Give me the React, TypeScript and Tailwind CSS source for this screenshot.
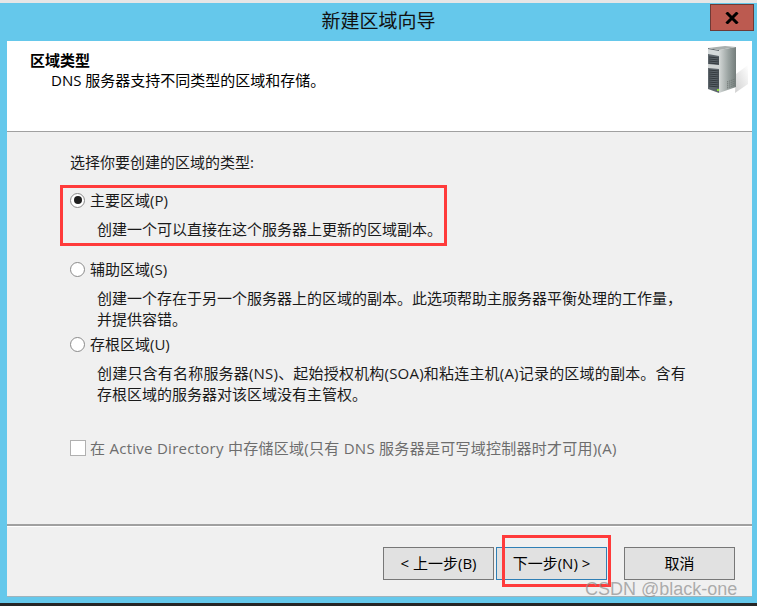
const font = '[font-family:"Open_Sans","Noto_Sans_CJK_SC",sans-serif]'

function ServerIcon() {
  return (
    <svg width="42" height="50" viewBox="0 0 42 50" className="mt-[5px]">
      <defs>
        <linearGradient id="side" x1="0" x2="1" y1="0" y2="0">
          <stop offset="0" stopColor="#d4d8d7" />
          <stop offset="0.55" stopColor="#9aa3a1" />
          <stop offset="1" stopColor="#747d7b" />
        </linearGradient>
        <linearGradient id="shadow" x1="0" x2="1" y1="1" y2="0">
          <stop offset="0" stopColor="#d0d0d0" />
          <stop offset="1" stopColor="#ffffff" />
        </linearGradient>
      </defs>
      <polygon points="28,47 41,38 41,19 29,28" fill="url(#shadow)" />
      <polygon points="1,2 12,4 12,47 1,43" fill="#5e666c" />
      <polygon points="12,4 29,1 29,41 12,47" fill="url(#side)" />
      <polygon points="1,2 18,0 29,1 12,4" fill="#a9afae" />
      <polygon points="1,3 12,5 12,10 1,8" fill="#d5dadb" />
      <polygon points="1,18 12,19 12,23 1,22" fill="#d0d4d4" />
      <path d="M2 11 L12 12 M2 13 L12 14 M2 15 L12 16 M2 17 L12 18 M2 24 L12 25 M2 26 L12 27 M2 28 L12 29 M2 30 L12 31 M2 32 L12 33 M2 34 L12 35 M2 36 L12 37 M2 38 L12 39 M2 40 L12 41" stroke="#33393e" strokeWidth="1" />
      <path d="M20 36 L28 33 M20 38 L28 35 M20 40 L28 37 M20 42 L28 39" stroke="#6a716f" strokeWidth="1" strokeDasharray="1 1" />
      <rect x="10" y="43" width="2" height="2" fill="#8fe03a" />
    </svg>
  )
}

function Radio({ checked }: { checked?: boolean }) {
  return (
    <span className="flex h-[15px] w-[15px] shrink-0 items-center justify-center rounded-full border border-[#8a8a8a] bg-white">
      {checked && <span className="h-[8px] w-[8px] rounded-full bg-[#1f1f1f]" />}
    </span>
  )
}

function Option({ label, checked, lines, className }: { label: string; checked?: boolean; lines: React.ReactNode[]; className: string }) {
  return (
    <div className={className}>
      <div className="flex h-[20px] items-center gap-[5px]">
        <Radio checked={checked} />
        <span>{label}</span>
      </div>
      <div className="mt-[9px] pl-[27px] leading-[21px]">
        {lines.map((line, i) => (
          <div key={i}>{line}</div>
        ))}
      </div>
    </div>
  )
}

function WizardButton({ children, focused }: { children: string; focused?: boolean }) {
  return (
    <button
      type="button"
      className={`h-[33px] w-[111px] border bg-[#e1e1e1] text-center text-[15px] text-black ${
        focused ? 'border-[#2f7fb5]' : 'border-[#777777]'
      }`}
    >
      {children}
    </button>
  )
}

export default function App() {
  return (
    <div className={`relative h-[606px] w-[757px] overflow-hidden bg-[#65c8eb] text-[15px] text-[#111111] ${font}`}>
      <div className="h-[3px] bg-[#e6e6e6]" />
      <div className="flex h-[38px] items-center justify-center pb-[1px] text-[19px] text-[#111111]">新建区域向导</div>

      {/* close button */}
      <div className="absolute right-[3px] top-[4px] flex h-[27px] w-[44px] items-center justify-center border border-[#6e3a36] bg-[#bc5a50]">
        <svg width="14" height="12" viewBox="0 0 14 12">
          <path d="M1.5 0.5 L12.5 11.5 M12.5 0.5 L1.5 11.5" stroke="#000000" strokeWidth="3" />
        </svg>
      </div>

      <div className="ml-[7px] mr-[5px] flex h-[555px] flex-col shadow-[0_1px_0_#9fb4bd] bg-[#f0f0f0]">
        {/* header */}
        <div className="flex h-[91px] shrink-0 justify-between border-b border-[#a0a0a0] bg-white pl-[23px] pr-[3px]">
          <div className="pt-[9px]">
            <div className="h-[20px] font-bold leading-[20px] text-black">区域类型</div>
            <div className="pl-[21px] leading-[21px] text-black">DNS 服务器支持不同类型的区域和存储。</div>
          </div>
          <ServerIcon />
        </div>

        {/* body */}
        <div className="flex flex-1 flex-col pl-[63px] text-[#1a1a1a]">
          <div className="mt-[20px] h-[20px] leading-[20px]">选择你要创建的区域的类型:</div>
          <Option className="mt-[18px]" checked label="主要区域(P)" lines={['创建一个可以直接在这个服务器上更新的区域副本。']} />
          <Option
            className="mt-[19px]"
            label="辅助区域(S)"
            lines={['创建一个存在于另一个服务器上的区域的副本。此选项帮助主服务器平衡处理的工作量，', '并提供容错。']}
          />
          <Option
            className="mt-[4px]"
            label="存根区域(U)"
            lines={[
              <span className="tracking-[0.2px]">创建只含有名称服务器(NS)、起始授权机构(SOA)和粘连主机(A)记录的区域的副本。含有</span>,
              '存根区域的服务器对该区域没有主管权。',
            ]}
          />
          <div className="mt-[33px] flex h-[20px] items-center gap-[4px] text-[#6d6d6d]">
            <span className="h-[16px] w-[16px] shrink-0 border border-[#b0b0b0] bg-white" />
            <span className="tracking-[0.27px]">在 Active Directory 中存储区域(只有 DNS 服务器是可写域控制器时才可用)(A)</span>
          </div>
        </div>

        {/* footer */}
        <div className="flex h-[72px] shrink-0 items-start justify-end border-t-2 border-[#a0a0a0] pr-[17px] pt-[21px] shadow-[inset_0_1px_0_#ffffff]">
          <div className="flex gap-[2px]">
            <WizardButton>{'< 上一步(B)'}</WizardButton>
            <WizardButton focused>{'下一步(N) >'}</WizardButton>
          </div>
          <div className="ml-[17px]">
            <WizardButton>取消</WizardButton>
          </div>
        </div>
      </div>

      <div className="mt-[7px] h-[3px] bg-[#262626]" />

      {/* annotation boxes drawn over the screenshot */}
      <div className="absolute left-[60px] top-[185px] h-[61px] w-[387px] border-[3px] border-[#ff3b3b]" />
      <div className="absolute left-[502px] top-[535px] h-[52px] w-[109px] border-[3px] border-[#ff3b3b]" />
      <div className="absolute left-[585px] top-[579px] text-[18px] leading-[21px] text-[#8c8c8c]/70 [font-family:'Liberation_Sans',sans-serif]">
        CSDN @black-one
      </div>
    </div>
  )
}
